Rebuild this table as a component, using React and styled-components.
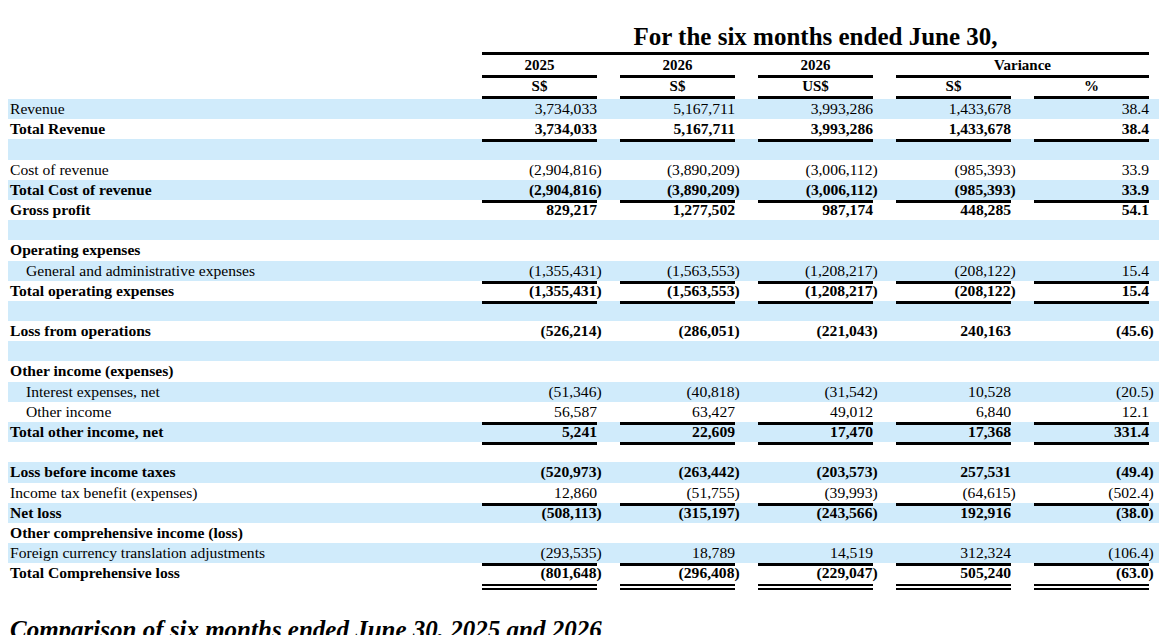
import React from "react";
import styled, { createGlobalStyle } from "styled-components";

const GlobalStyle = createGlobalStyle`
  body {
    margin: 0;
    background: #fff;
    color: #000;
    font-family: "Liberation Serif", "Times New Roman", serif;
  }
`;

const rows = [
  { label: "Revenue", vals: ["3,734,033", "5,167,711", "3,993,286", "1,433,678", "38.4"] },
  { label: "Total Revenue", bold: true, rule: "single", vals: ["3,734,033", "5,167,711", "3,993,286", "1,433,678", "38.4"] },
  {},
  { label: "Cost of revenue", vals: ["(2,904,816)", "(3,890,209)", "(3,006,112)", "(985,393)", "33.9"] },
  { label: "Total Cost of revenue", bold: true, rule: "single", vals: ["(2,904,816)", "(3,890,209)", "(3,006,112)", "(985,393)", "33.9"] },
  { label: "Gross profit", bold: true, vals: ["829,217", "1,277,502", "987,174", "448,285", "54.1"] },
  {},
  { label: "Operating expenses", bold: true },
  { label: "General and administrative expenses", indent: true, rule: "single", vals: ["(1,355,431)", "(1,563,553)", "(1,208,217)", "(208,122)", "15.4"] },
  { label: "Total operating expenses", bold: true, rule: "single", vals: ["(1,355,431)", "(1,563,553)", "(1,208,217)", "(208,122)", "15.4"] },
  {},
  { label: "Loss from operations", bold: true, vals: ["(526,214)", "(286,051)", "(221,043)", "240,163", "(45.6)"] },
  {},
  { label: "Other income (expenses)", bold: true },
  { label: "Interest expenses, net", indent: true, vals: ["(51,346)", "(40,818)", "(31,542)", "10,528", "(20.5)"] },
  { label: "Other income", indent: true, rule: "single", vals: ["56,587", "63,427", "49,012", "6,840", "12.1"] },
  { label: "Total other income, net", bold: true, rule: "single", vals: ["5,241", "22,609", "17,470", "17,368", "331.4"] },
  {},
  { label: "Loss before income taxes", bold: true, vals: ["(520,973)", "(263,442)", "(203,573)", "257,531", "(49.4)"] },
  { label: "Income tax benefit (expenses)", rule: "single", vals: ["12,860", "(51,755)", "(39,993)", "(64,615)", "(502.4)"] },
  { label: "Net loss", bold: true, vals: ["(508,113)", "(315,197)", "(243,566)", "192,916", "(38.0)"] },
  { label: "Other comprehensive income (loss)", bold: true },
  { label: "Foreign currency translation adjustments", rule: "single", vals: ["(293,535)", "18,789", "14,519", "312,324", "(106.4)"] },
  { label: "Total Comprehensive loss", bold: true, rule: "double", vals: ["(801,648)", "(296,408)", "(229,047)", "505,240", "(63.0)"] },
];

function App() {
  return (
    <>
      <GlobalStyle />
      <Page>
        <Grid>
          <Title>For the six months ended June 30,</Title>
        </Grid>
        <HeadRow $height={21}>
          <div />
          <HeadCell>2025</HeadCell>
          <HeadCell>2026</HeadCell>
          <HeadCell>2026</HeadCell>
          <HeadCell $span="5 / 7">Variance</HeadCell>
        </HeadRow>
        <HeadRow $height={23}>
          <div />
          <HeadCell>S$</HeadCell>
          <HeadCell>S$</HeadCell>
          <HeadCell>US$</HeadCell>
          <HeadCell>S$</HeadCell>
          <HeadCell>%</HeadCell>
        </HeadRow>

        {rows.map((r, i) => (
          <Row key={i} $shaded={i % 2 === 0} $bold={r.bold} $double={r.rule === "double"}>
            <Label $indent={r.indent}>{r.label}</Label>
            {r.vals &&
              r.vals.map((v, j) => (
                <Num key={j} $rule={r.rule}>
                  {v.endsWith(")") ? (
                    <>
                      {v.slice(0, -1)}
                      <Close>)</Close>
                    </>
                  ) : (
                    v
                  )}
                </Num>
              ))}
          </Row>
        ))}

        <Section>Comparison of six months ended June 30, 2025 and 2026</Section>
      </Page>
    </>
  );
}

export default App;

const Page = styled.div`
  padding: 22px 0 0 8px;
  width: 1151px;
`;

const Grid = styled.div`
  display: grid;
  grid-template-columns: 451px repeat(5, 115px);
  column-gap: 23px;
  padding-right: 10px;
`;

const Title = styled.div`
  grid-column: 2 / 7;
  text-align: center;
  font-size: 25px;
  font-weight: bold;
  line-height: 30px;
  border-bottom: 3px solid #000;
`;

const HeadRow = styled(Grid)`
  height: ${(props) => props.$height}px;
`;

const HeadCell = styled.div`
  grid-column: ${(props) => props.$span || "auto"};
  box-sizing: border-box;
  height: 100%;
  text-align: center;
  font-size: 15px;
  font-weight: bold;
  line-height: 20px;
  border-bottom: 3px solid #000;
`;

const Row = styled(Grid)`
  height: ${(props) => (props.$double ? "26.2px" : "20.2px")};
  background: ${(props) => (props.$shaded ? "#d0ebfb" : "#fff")};
  font-size: 15.6px;
  line-height: 20px;
  font-weight: ${(props) => (props.$bold ? "bold" : "normal")};
`;

const Label = styled.div`
  padding-left: ${(props) => (props.$indent ? "18px" : "2px")};
  white-space: nowrap;
`;

const Num = styled.div`
  box-sizing: border-box;
  height: 100%;
  text-align: right;
  white-space: nowrap;
  border-bottom: ${(props) =>
    props.$rule === "double"
      ? "6px double #000"
      : props.$rule === "single"
      ? "3px solid #000"
      : "none"};
`;

const Close = styled.span`
  margin-right: -0.3em;
`;

const Section = styled.div`
  margin-top: 25px;
  padding-left: 2px;
  font-size: 25px;
  font-weight: bold;
  font-style: italic;
  line-height: 30px;
  white-space: nowrap;
`;
